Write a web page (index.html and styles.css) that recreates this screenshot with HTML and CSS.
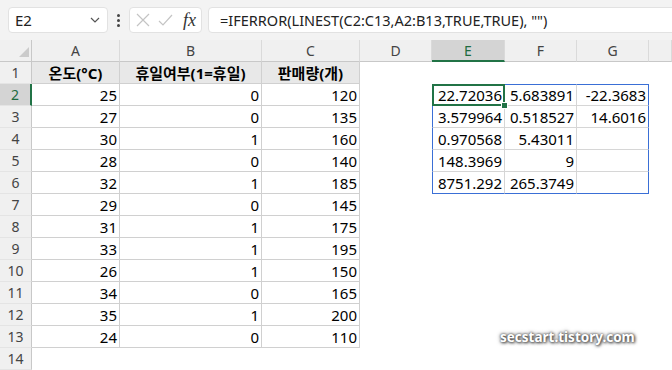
FILE: index.html
```html
<!DOCTYPE html>
<html lang="ko">
<head>
  <meta charset="UTF-8">
  <title>LINEST</title>
  <link rel="stylesheet" href="styles.css">
</head>
<body>
  <div class="toolbar">
    <div class="namebox">
      <span>E2</span>
      <svg width="10" height="6" viewBox="0 0 10 6"><polyline points="1,1 5,5 9,1" fill="none" stroke="#555" stroke-width="1.2"/></svg>
    </div>
    <div class="dots"><i></i><i></i><i></i></div>
    <div class="fxbox">
      <svg width="14" height="14" viewBox="0 0 14 14"><path d="M1 1L13 13M13 1L1 13" stroke="#c4c4c4" stroke-width="1.2"/></svg>
      <svg width="15" height="13" viewBox="0 0 15 13"><polyline points="1,7 5,11 14,1" fill="none" stroke="#c4c4c4" stroke-width="1.2"/></svg>
      <span class="fx">fx</span>
    </div>
    <div class="formula">=IFERROR(LINEST(C2:C13,A2:B13,TRUE,TRUE), "")</div>
  </div>

  <div class="sheet">
    <div class="row">
      <div class="corner"><b></b></div>
      <div class="hd">A</div><div class="hd">B</div><div class="hd">C</div><div class="hd">D</div>
      <div class="hd sel">E</div><div class="hd">F</div><div class="hd">G</div><div class="hd"></div>
    </div>
    <div class="row">
      <div class="rh">1</div>
      <div class="cell tbl top">온도(°C)</div><div class="cell tbl top">휴일여부(1=휴일)</div><div class="cell tbl top">판매량(개)</div>
      <div class="cell"></div><div class="cell"></div><div class="cell"></div><div class="cell"></div><div class="cell"></div>
    </div>
    <div class="row">
      <div class="rh sel">2</div>
      <div class="cell tbl">25</div><div class="cell tbl">0</div><div class="cell tbl">120</div><div class="cell"></div>
      <div class="cell sp sp-t sp-l active">22.72036</div><div class="cell sp sp-t">5.683891</div><div class="cell sp sp-t sp-r">-22.3683</div><div class="cell"></div>
    </div>
    <div class="row">
      <div class="rh">3</div>
      <div class="cell tbl">27</div><div class="cell tbl">0</div><div class="cell tbl">135</div><div class="cell"></div>
      <div class="cell sp sp-l">3.579964</div><div class="cell sp">0.518527</div><div class="cell sp sp-r">14.6016</div><div class="cell"></div>
    </div>
    <div class="row">
      <div class="rh">4</div>
      <div class="cell tbl">30</div><div class="cell tbl">1</div><div class="cell tbl">160</div><div class="cell"></div>
      <div class="cell sp sp-l">0.970568</div><div class="cell sp">5.43011</div><div class="cell sp sp-r"></div><div class="cell"></div>
    </div>
    <div class="row">
      <div class="rh">5</div>
      <div class="cell tbl">28</div><div class="cell tbl">0</div><div class="cell tbl">140</div><div class="cell"></div>
      <div class="cell sp sp-l">148.3969</div><div class="cell sp">9</div><div class="cell sp sp-r"></div><div class="cell"></div>
    </div>
    <div class="row">
      <div class="rh">6</div>
      <div class="cell tbl">32</div><div class="cell tbl">1</div><div class="cell tbl">185</div><div class="cell"></div>
      <div class="cell sp sp-l sp-b">8751.292</div><div class="cell sp sp-b">265.3749</div><div class="cell sp sp-r sp-b"></div><div class="cell"></div>
    </div>
    <div class="row">
      <div class="rh">7</div>
      <div class="cell tbl">29</div><div class="cell tbl">0</div><div class="cell tbl">145</div>
    </div>
    <div class="row">
      <div class="rh">8</div>
      <div class="cell tbl">31</div><div class="cell tbl">1</div><div class="cell tbl">175</div>
    </div>
    <div class="row">
      <div class="rh">9</div>
      <div class="cell tbl">33</div><div class="cell tbl">1</div><div class="cell tbl">195</div>
    </div>
    <div class="row">
      <div class="rh">10</div>
      <div class="cell tbl">26</div><div class="cell tbl">1</div><div class="cell tbl">150</div>
    </div>
    <div class="row">
      <div class="rh">11</div>
      <div class="cell tbl">34</div><div class="cell tbl">0</div><div class="cell tbl">165</div>
    </div>
    <div class="row">
      <div class="rh">12</div>
      <div class="cell tbl">35</div><div class="cell tbl">1</div><div class="cell tbl">200</div>
    </div>
    <div class="row">
      <div class="rh">13</div>
      <div class="cell tbl">24</div><div class="cell tbl">0</div><div class="cell tbl">110</div>
    </div>
    <div class="row">
      <div class="rh">14</div>
    </div>
  </div>

  <div class="watermark">secstart.tistory.com</div>
</body>
</html>
```

FILE: styles.css
```css
body {
  margin: 0;
  width: 672px;
  height: 370px;
  overflow: hidden;
  position: relative;
  background: #fff;
  font-family: "Noto Sans", "Noto Sans CJK KR", sans-serif;
  color: #000;
}

.toolbar {
  height: 40px;
  box-sizing: border-box;
  padding: 7px 0 7px 8px;
  display: flex;
  align-items: stretch;
  background-color: #f3f3f3;
}

.namebox {
  width: 100px;
  box-sizing: border-box;
  display: flex;
  align-items: center;
  justify-content: space-between;
  padding: 0 7px 0 6px;
  background: #fff;
  border: 1px solid #e2e2e2;
  border-radius: 4px;
  font-size: 15px;
  color: #222;
}

.dots {
  width: 21px;
  display: flex;
  flex-direction: column;
  align-items: center;
  justify-content: center;
  gap: 2px;
}

.dots i {
  width: 3px;
  height: 3px;
  border-radius: 50%;
  background: #444;
}

.fxbox {
  width: 73px;
  box-sizing: border-box;
  display: flex;
  align-items: center;
  gap: 8px;
  padding-left: 6px;
  background: #fff;
  border: 1px solid #e2e2e2;
  border-radius: 4px;
}

.fx {
  font-family: "Liberation Serif", serif;
  font-style: italic;
  font-size: 18px;
  color: #333;
  margin-left: 2px;
}

.formula {
  flex: 1;
  margin-left: 6px;
  margin-right: -8px;
  display: flex;
  align-items: center;
  padding-left: 11px;
  background: #fff;
  border: 1px solid #e2e2e2;
  border-radius: 4px;
  font-size: 14.5px;
  color: #222;
  white-space: nowrap;
}

.row {
  display: grid;
  grid-template-columns: 32px 88px 142px 98px 72px 73px 72px 72px 23px;
  height: 22px;
}

.row > div {
  box-sizing: border-box;
  display: flex;
  align-items: center;
  min-width: 0;
  overflow: visible;
  white-space: nowrap;
}

.corner {
  background: #f0f0f0;
  border-right: 1px solid #c8c8c8;
  border-bottom: 1px solid #c8c8c8;
  justify-content: flex-end;
  align-items: flex-end !important;
  padding: 0 2px 4px 0;
}

.corner b {
  width: 0;
  height: 0;
  border-left: 10px solid transparent;
  border-bottom: 10px solid #cbcbcb;
}

.hd {
  justify-content: center;
  background: #f0f0f0;
  border-right: 1px solid #dadada;
  border-bottom: 1px solid #c8c8c8;
  font-size: 14px;
  color: #444;
}

.hd.sel {
  background: #d4d4d4;
  border-bottom: 2px solid #217346;
  color: #1e6b40;
}

.rh {
  justify-content: center;
  background: #f0f0f0;
  border-right: 1px solid #c8c8c8;
  border-bottom: 1px solid #e4e4e4;
  font-size: 14px;
  color: #444;
}

.rh.sel {
  background: #d4d4d4;
  border-right: 2px solid #217346;
  color: #1e6b40;
}

.cell {
  justify-content: flex-end;
  padding-right: 2px;
  font-size: 15px;
}

.tbl {
  border-right: 1px solid #d0d0d0;
  border-bottom: 1px solid #d0d0d0;
}

.top {
  justify-content: center;
  padding-right: 0;
  background: #e8e8e8;
  font-weight: bold;
}

.sp {
  border-right: 1px solid #d6d6d6;
  border-bottom: 1px solid #d6d6d6;
}

.sp-t { border-top: 1px solid #3a6fd6; }
.sp-l { border-left: 1px solid #3a6fd6; }
.sp-r { border-right: 1px solid #3a6fd6; }
.sp-b { border-bottom: 1px solid #3a6fd6; }

.active {
  position: relative;
}

.active::before {
  content: "";
  position: absolute;
  left: -1px;
  top: -1px;
  right: -1px;
  bottom: -1px;
  border: 2px solid #217346;
}

.active::after {
  content: "";
  position: absolute;
  right: -4px;
  bottom: -4px;
  width: 5px;
  height: 5px;
  background: #217346;
  border: 1px solid #fff;
}

.watermark {
  position: absolute;
  left: 500px;
  top: 328px;
  font-size: 13.5px;
  font-weight: bold;
  color: #fff;
  text-shadow: 0 0 2px #555, 1px 1px 3px #444, 0 0 4px #666;
}
```
